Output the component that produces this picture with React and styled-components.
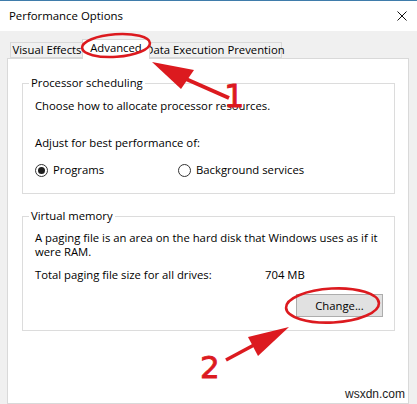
import React from "react";
import styled, { createGlobalStyle } from "styled-components";

const GlobalStyle = createGlobalStyle`
  html, body { margin: 0; padding: 0; background: #ffffff; }
  #root { width: 417px; height: 404px; overflow: hidden; }
  * { box-sizing: border-box; }
`;

const UI_FONT = `"Open Sans", "Noto Sans", "DejaVu Sans", sans-serif`;
const RED = "#dc1a1f";

const Window = styled.div`
  position: relative;
  width: 417px;
  height: 404px;
  display: flex;
  flex-direction: column;
  font-family: ${UI_FONT};
  font-size: 11.3px;
  color: #000;
  background: #f0f0f0;
  overflow: hidden;
`;

const TitleBar = styled.div`
  height: 31px;
  flex: none;
  display: flex;
  align-items: center;
  justify-content: space-between;
  padding: 0 10px 0 9px;
  background: #ffffff;
  border-top: 1px solid #3f7cab;
`;

const Title = styled.span`
  font-size: 11.4px;
  line-height: 16px;
`;

const CloseButton = styled.span`
  display: flex;
  width: 10px;
  height: 10px;
`;

const Body = styled.div`
  flex: 1;
  display: flex;
  flex-direction: column;
  padding: 8px 8px 0 7px;
  background: #f0f0f0;
`;

const TabStrip = styled.div`
  display: flex;
  align-items: flex-end;
  padding-left: 3px;
  height: 19px;
  position: relative;
  z-index: 1;
`;

const Tab = styled.div`
  display: flex;
  align-items: center;
  justify-content: center;
  width: ${(p) => p.$w}px;
  height: ${(p) => (p.$active ? 20 : 16)}px;
  margin: ${(p) => (p.$active ? "0 -2px -1px -2px" : "0")};
  padding-top: ${(p) => (p.$active ? 0 : 1)}px;
  padding-bottom: ${(p) => (p.$active ? 3 : 1)}px;
  background: ${(p) => (p.$active ? "#ffffff" : "#f0f0f0")};
  border: 1px solid #d9d9d9;
  border-bottom: ${(p) => (p.$active ? "none" : "1px solid #d9d9d9")};
  position: relative;
  z-index: ${(p) => (p.$active ? 2 : 1)};
  white-space: nowrap;
  line-height: 14px;
`;

const Panel = styled.div`
  flex: 1;
  display: flex;
  flex-direction: column;
  gap: 14px;
  background: #ffffff;
  border: 1px solid #d9d9d9;
  padding: 16px 13px 0 14px;
`;

const Group = styled.fieldset`
  margin: 0;
  min-width: 0;
  border: 1px solid #dcdcdc;
  padding: ${(p) => p.$pad};
  display: flex;
  flex-direction: column;
`;

const Legend = styled.legend`
  padding: 0 2px;
  margin-left: -6px;
  line-height: 16px;
`;

const Line = styled.div`
  line-height: 14px;
  margin-top: ${(p) => p.$mt || 0}px;
  white-space: nowrap;
`;

const RadioRow = styled.div`
  display: grid;
  grid-template-columns: 143px auto;
  margin-top: 13px;
  line-height: 14px;
`;

const RadioLabel = styled.label`
  display: flex;
  align-items: center;
  gap: 5px;
  height: 14px;
`;

const RadioCircle = styled.span`
  width: 13px;
  height: 13px;
  border-radius: 50%;
  border: 1px solid #333333;
  background: #ffffff;
  display: flex;
  align-items: center;
  justify-content: center;
  flex: none;
  &::after {
    content: "";
    width: 7px;
    height: 7px;
    border-radius: 50%;
    background: ${(p) => (p.$checked ? "#1f1f1f" : "transparent")};
  }
`;

const SizeRow = styled.div`
  display: grid;
  grid-template-columns: 230px auto;
  line-height: 14px;
  margin-top: 9px;
`;

const ButtonRow = styled.div`
  display: flex;
  justify-content: flex-end;
  margin-top: 12px;
`;

const Button = styled.button`
  width: 87px;
  height: 23px;
  font-family: ${UI_FONT};
  font-size: 11.3px;
  color: #000;
  background: #e1e1e1;
  border: 1px solid #adadad;
  padding: 0;
  margin: 0;
`;

const Annotations = styled.svg`
  position: absolute;
  left: 0;
  top: 0;
  width: 417px;
  height: 404px;
  pointer-events: none;
  z-index: 5;
`;

const Watermark = styled.div`
  position: absolute;
  left: 345px;
  top: 386px;
  font-family: "Liberation Sans", Arial, sans-serif;
  font-size: 12px;
  line-height: 16px;
  color: #1c1c1c;
  z-index: 6;
`;

function Radio({ checked, children }) {
  return (
    <RadioLabel>
      <RadioCircle $checked={checked} />
      <span>{children}</span>
    </RadioLabel>
  );
}

export default function App() {
  return (
    <>
      <GlobalStyle />
      <Window>
        <TitleBar>
          <Title>Performance Options</Title>
          <CloseButton>
            <svg width="10" height="10" viewBox="0 0 10 10">
              <path d="M0.5 0.5 L9.5 9.5 M9.5 0.5 L0.5 9.5" stroke="#111" strokeWidth="1" fill="none" />
            </svg>
          </CloseButton>
        </TitleBar>
        <Body>
          <TabStrip>
            <Tab $w={74}>Visual Effects</Tab>
            <Tab $w={68} $active>Advanced</Tab>
            <Tab $w={134}>Data Execution Prevention</Tab>
          </TabStrip>
          <Panel>
            <Group $pad="8px 11px 16px 12px">
              <Legend>Processor scheduling</Legend>
              <Line>Choose how to allocate processor resources.</Line>
              <Line $mt={23}>Adjust for best performance of:</Line>
              <RadioRow>
                <Radio checked>Programs</Radio>
                <Radio>Background services</Radio>
              </RadioRow>
            </Group>
            <Group $pad="7px 11px 13px 12px">
              <Legend>Virtual memory</Legend>
              <Line>A paging file is an area on the hard disk that Windows uses as if it</Line>
              <Line>were RAM.</Line>
              <SizeRow>
                <span>Total paging file size for all drives:</span>
                <span>704 MB</span>
              </SizeRow>
              <ButtonRow>
                <Button>Change...</Button>
              </ButtonRow>
            </Group>
          </Panel>
        </Body>

        <Annotations viewBox="0 0 417 404">
          <ellipse cx="116" cy="45.5" rx="34" ry="11.3" fill="none" stroke={RED} strokeWidth="2.6" transform="rotate(-4 116 45.5)" />
          <polygon points="152,62 194,70 181,89" fill={RED} />
          <line x1="186" y1="79" x2="229" y2="98" stroke={RED} strokeWidth="4" />
          <text x="224" y="107" fill={RED} stroke={RED} strokeWidth="0.8" fontFamily="DejaVu Sans, sans-serif" fontSize="32">1</text>

          <ellipse cx="332.5" cy="305.5" rx="46.5" ry="17" fill="none" stroke={RED} strokeWidth="2.6" transform="rotate(-3 332.5 305.5)" />
          <polygon points="289,327 248,337 258,356" fill={RED} />
          <line x1="254" y1="345" x2="226" y2="360" stroke={RED} strokeWidth="3.6" />
          <text x="200" y="378" fill={RED} stroke={RED} strokeWidth="0.8" fontFamily="DejaVu Sans, sans-serif" fontSize="31">2</text>
        </Annotations>
        <Watermark>wsxdn.com</Watermark>
      </Window>
    </>
  );
}
